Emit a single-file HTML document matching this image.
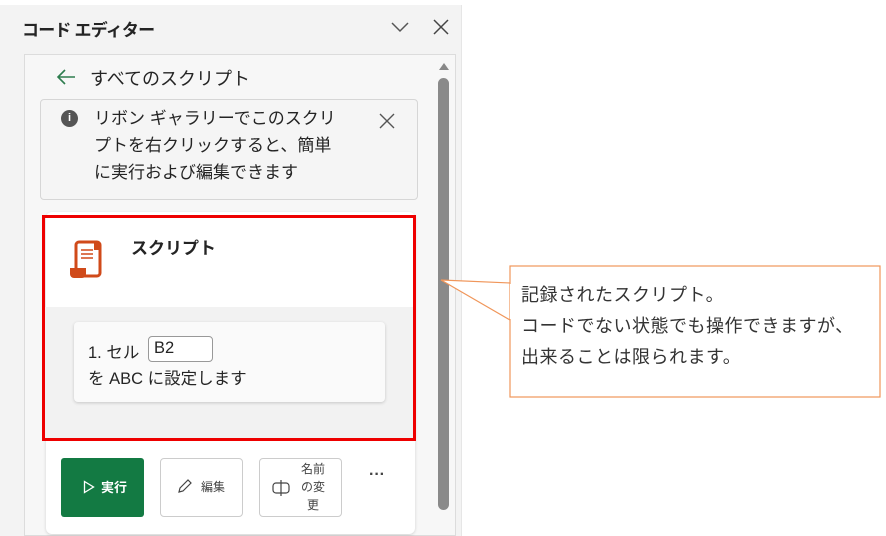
<!DOCTYPE html>
<html><head><meta charset="utf-8"><style>
*{box-sizing:border-box;margin:0;padding:0}
body{width:886px;height:536px;background:#fff;position:relative;overflow:hidden;font-family:"Liberation Sans","Noto Sans CJK JP",sans-serif;color:#242424}
.abs{position:absolute}
</style></head><body>
<div class="abs" style="left:0;top:5px;width:462px;height:531px;background:#f3f3f3;border-right:1px solid #e6e6e6"></div>
<div class="abs" style="left:22px;top:16px;font-size:17px;font-weight:bold;letter-spacing:-0.8px">コード エディター</div>
<svg class="abs" style="left:390px;top:20px" width="20" height="14"><path d="M2 3 L10 11 L18 3" stroke="#555" stroke-width="1.5" fill="none"/></svg>
<svg class="abs" style="left:432px;top:18px" width="18" height="18"><path d="M2 2 L16 16 M16 2 L2 16" stroke="#444" stroke-width="1.5"/></svg>
<div class="abs" style="left:24px;top:54px;width:432px;height:482px;background:#f7f7f7;border:1px solid #dcdcdc"></div>
<svg class="abs" style="left:437px;top:60px" width="14" height="12"><path d="M2 10 L7 3 L12 10Z" fill="#888"/></svg>
<div class="abs" style="left:438px;top:78px;width:11px;height:432px;background:#8a8a8a;border-radius:6px"></div>
<svg class="abs" style="left:55px;top:68px" width="22" height="18"><path d="M20 9 H3 M10 2 L3 9 L10 16" stroke="#2e7d4f" stroke-width="1.6" fill="none"/></svg>
<div class="abs" style="left:90px;top:65px;font-size:18px">すべてのスクリプト</div>
<div class="abs" style="left:40px;top:99px;width:378px;height:101px;border:1px solid #d6d6d6;border-radius:4px;background:#f5f5f5"></div>
<div class="abs" style="left:61px;top:110px;width:17px;height:17px;border-radius:50%;background:#555;color:#fff;font-size:11px;font-weight:bold;text-align:center;line-height:17px">i</div>
<div class="abs" style="left:94px;top:105px;font-size:17px;line-height:27px;width:290px">リボン ギャラリーでこのスクリ<br>プトを右クリックすると、簡単<br>に実行および編集できます</div>
<svg class="abs" style="left:378px;top:112px" width="18" height="18"><path d="M2 2 L16 16 M16 2 L2 16" stroke="#555" stroke-width="1.4"/></svg>
<div class="abs" style="left:46px;top:212px;width:369px;height:322px;background:#fff;border-radius:6px;box-shadow:0 1px 3px rgba(0,0,0,.15)"></div>
<div class="abs" style="left:44px;top:307px;width:370px;height:132px;background:#f2f2f2"></div>
<div class="abs" style="left:42px;top:215px;width:374px;height:226px;border:3px solid #e00"></div>
<svg class="abs" style="left:68px;top:240px" width="36" height="40" viewBox="0 0 36 40"><rect x="8" y="2" width="24" height="34" rx="3" fill="#fff" stroke="#d04a1a" stroke-width="3"/><path d="M26 2 h6 v8 h-6z" fill="#d04a1a"/><path d="M2 28 h16 v6 a4 4 0 0 1 -4 4 h-8 a4 4 0 0 1 -4 -4z" fill="#d04a1a"/><path d="M13 10 h12 M13 14 h12 M13 18 h12" stroke="#d04a1a" stroke-width="1.6"/></svg>
<div class="abs" style="left:131px;top:234px;font-size:17px;font-weight:bold">スクリプト</div>
<div class="abs" style="left:74px;top:322px;width:311px;height:80px;background:#fafafa;border-radius:4px;box-shadow:0 1px 3px rgba(0,0,0,.18)"></div>
<div class="abs" style="left:88px;top:339px;font-size:16.5px">1. セル</div>
<div class="abs" style="left:148px;top:336px;width:65px;height:26px;border:1px solid #999;border-radius:4px;background:#fff;font-size:16.5px;padding:2px 5px">B2</div>
<div class="abs" style="left:88px;top:365px;font-size:16.5px">を ABC に設定します</div>
<div class="abs" style="left:61px;top:458px;width:83px;height:59px;background:#137a43;border-radius:3px;color:#fff;font-size:13px;font-weight:bold;line-height:59px;padding-left:22px"><svg style="vertical-align:-2px;margin-right:6px" width="12" height="14"><path d="M1.5 1.5 L10.5 7 L1.5 12.5Z" stroke="#fff" stroke-width="1.3" fill="none"/></svg>実行</div>
<div class="abs" style="left:160px;top:458px;width:83px;height:59px;border:1px solid #ccc;border-radius:4px;background:#fff;font-size:12px;line-height:57px;padding-left:16px;color:#444"><svg style="vertical-align:-3px;margin-right:8px" width="16" height="16"><path d="M2 14 L3 10 L11 2 L14 5 L6 13Z" stroke="#444" stroke-width="1.2" fill="none"/></svg>編集</div>
<div class="abs" style="left:259px;top:458px;width:83px;height:59px;border:1px solid #ccc;border-radius:4px;background:#fff"></div>
<svg class="abs" style="left:272px;top:479px" width="18" height="18"><rect x="1" y="4" width="16" height="10" rx="3" fill="none" stroke="#444" stroke-width="1.2"/><path d="M9 1 V17" stroke="#444" stroke-width="1.2"/></svg>
<div class="abs" style="left:298px;top:460px;font-size:12px;line-height:18px;text-align:center;width:30px;color:#444">名前<br>の変<br>更</div>
<div class="abs" style="left:369px;top:466px;font-size:16px;font-weight:bold;color:#444">···</div>
<svg class="abs" style="left:0;top:0" width="886" height="536"><path d="M510 283 L441 280 L510 320" fill="#fff" stroke="#f0965a" stroke-width="1.2"/><rect x="510" y="266" width="370" height="131" fill="#fff" stroke="#f0965a" stroke-width="1.2"/><path d="M511 284 V319" stroke="#fff" stroke-width="2"/></svg>
<div class="abs" style="left:521px;top:280px;font-size:18px;line-height:31px;color:#333;letter-spacing:0.5px">記録されたスクリプト。<br>コードでない状態でも操作できますが、<br>出来ることは限られます。</div>
</body></html>
